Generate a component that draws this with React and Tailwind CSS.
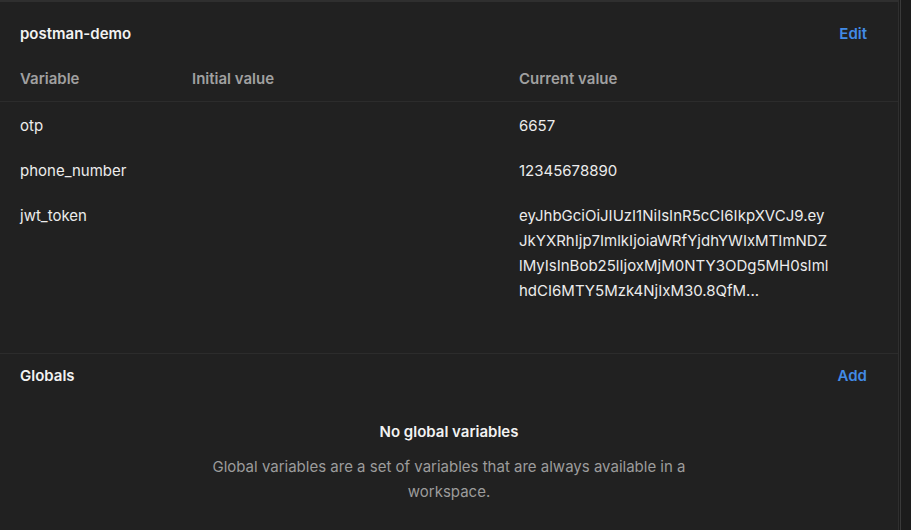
export default function App() {
  const rows = [
    { name: "otp", value: ["6657"] },
    { name: "phone_number", value: ["12345678890"] },
    {
      name: "jwt_token",
      value: [
        "eyJhbGciOiJIUzI1NiIsInR5cCI6IkpXVCJ9.ey",
        "JkYXRhIjp7ImlkIjoiaWRfYjdhYWIxMTImNDZ",
        "lMyIsInBob25lIjoxMjM0NTY3ODg5MH0sIml",
        "hdCI6MTY5Mzk4NjIxM30.8QfM...",
      ],
    },
  ];
  return (
    <div
      className="flex h-[530px] w-[911px] bg-[#1c1c1c] text-[15px]"
      style={{ fontFamily: "Inter, 'Noto Sans', sans-serif" }}
    >
      <div className="flex w-[899px] flex-col border-t-2 border-r border-[#2f2f2f] bg-[#212121]">
        <div className="flex justify-between pl-5 pr-[31px] pt-[22px]">
          <span className="font-semibold leading-5 text-[#f2f2f2]">postman-demo</span>
          <span className="font-semibold leading-5 text-[#428be6]">Edit</span>
        </div>
        <div className="mt-[25px] grid grid-cols-[172px_327px_1fr] border-b border-[#2c2c2c] pb-[12px] pl-5 font-semibold leading-5 text-[#a0a0a0]">
          <span>Variable</span>
          <span>Initial value</span>
          <span>Current value</span>
        </div>
        <div className="flex flex-col gap-5 pt-[11px] pb-[50px] pl-5">
          {rows.map((r) => (
            <div key={r.name} className="grid grid-cols-[172px_327px_1fr] leading-[25px] text-[#ececec]">
              <span>{r.name}</span>
              <span></span>
              <div className="flex flex-col">
                {r.value.map((v) => (
                  <span key={v}>{v}</span>
                ))}
              </div>
            </div>
          ))}
        </div>
        <div className="flex flex-1 flex-col border-t border-[#2c2c2c]">
          <div className="flex justify-between pl-5 pr-[31px] pt-3">
            <span className="font-semibold leading-5 text-[#f2f2f2]">Globals</span>
            <span className="font-semibold leading-5 text-[#428be6]">Add</span>
          </div>
          <div className="mt-[36px] text-center font-semibold leading-5 text-[#f2f2f2]">No global variables</div>
          <div className="mx-auto mt-[12px] w-[490px] text-center leading-[25px] text-[#9c9c9c]">
            Global variables are a set of variables that are always available in a workspace.
          </div>
        </div>
      </div>
      <div className="ml-[1px] w-[1px] bg-[#3a3a3a]" />
    </div>
  );
}
